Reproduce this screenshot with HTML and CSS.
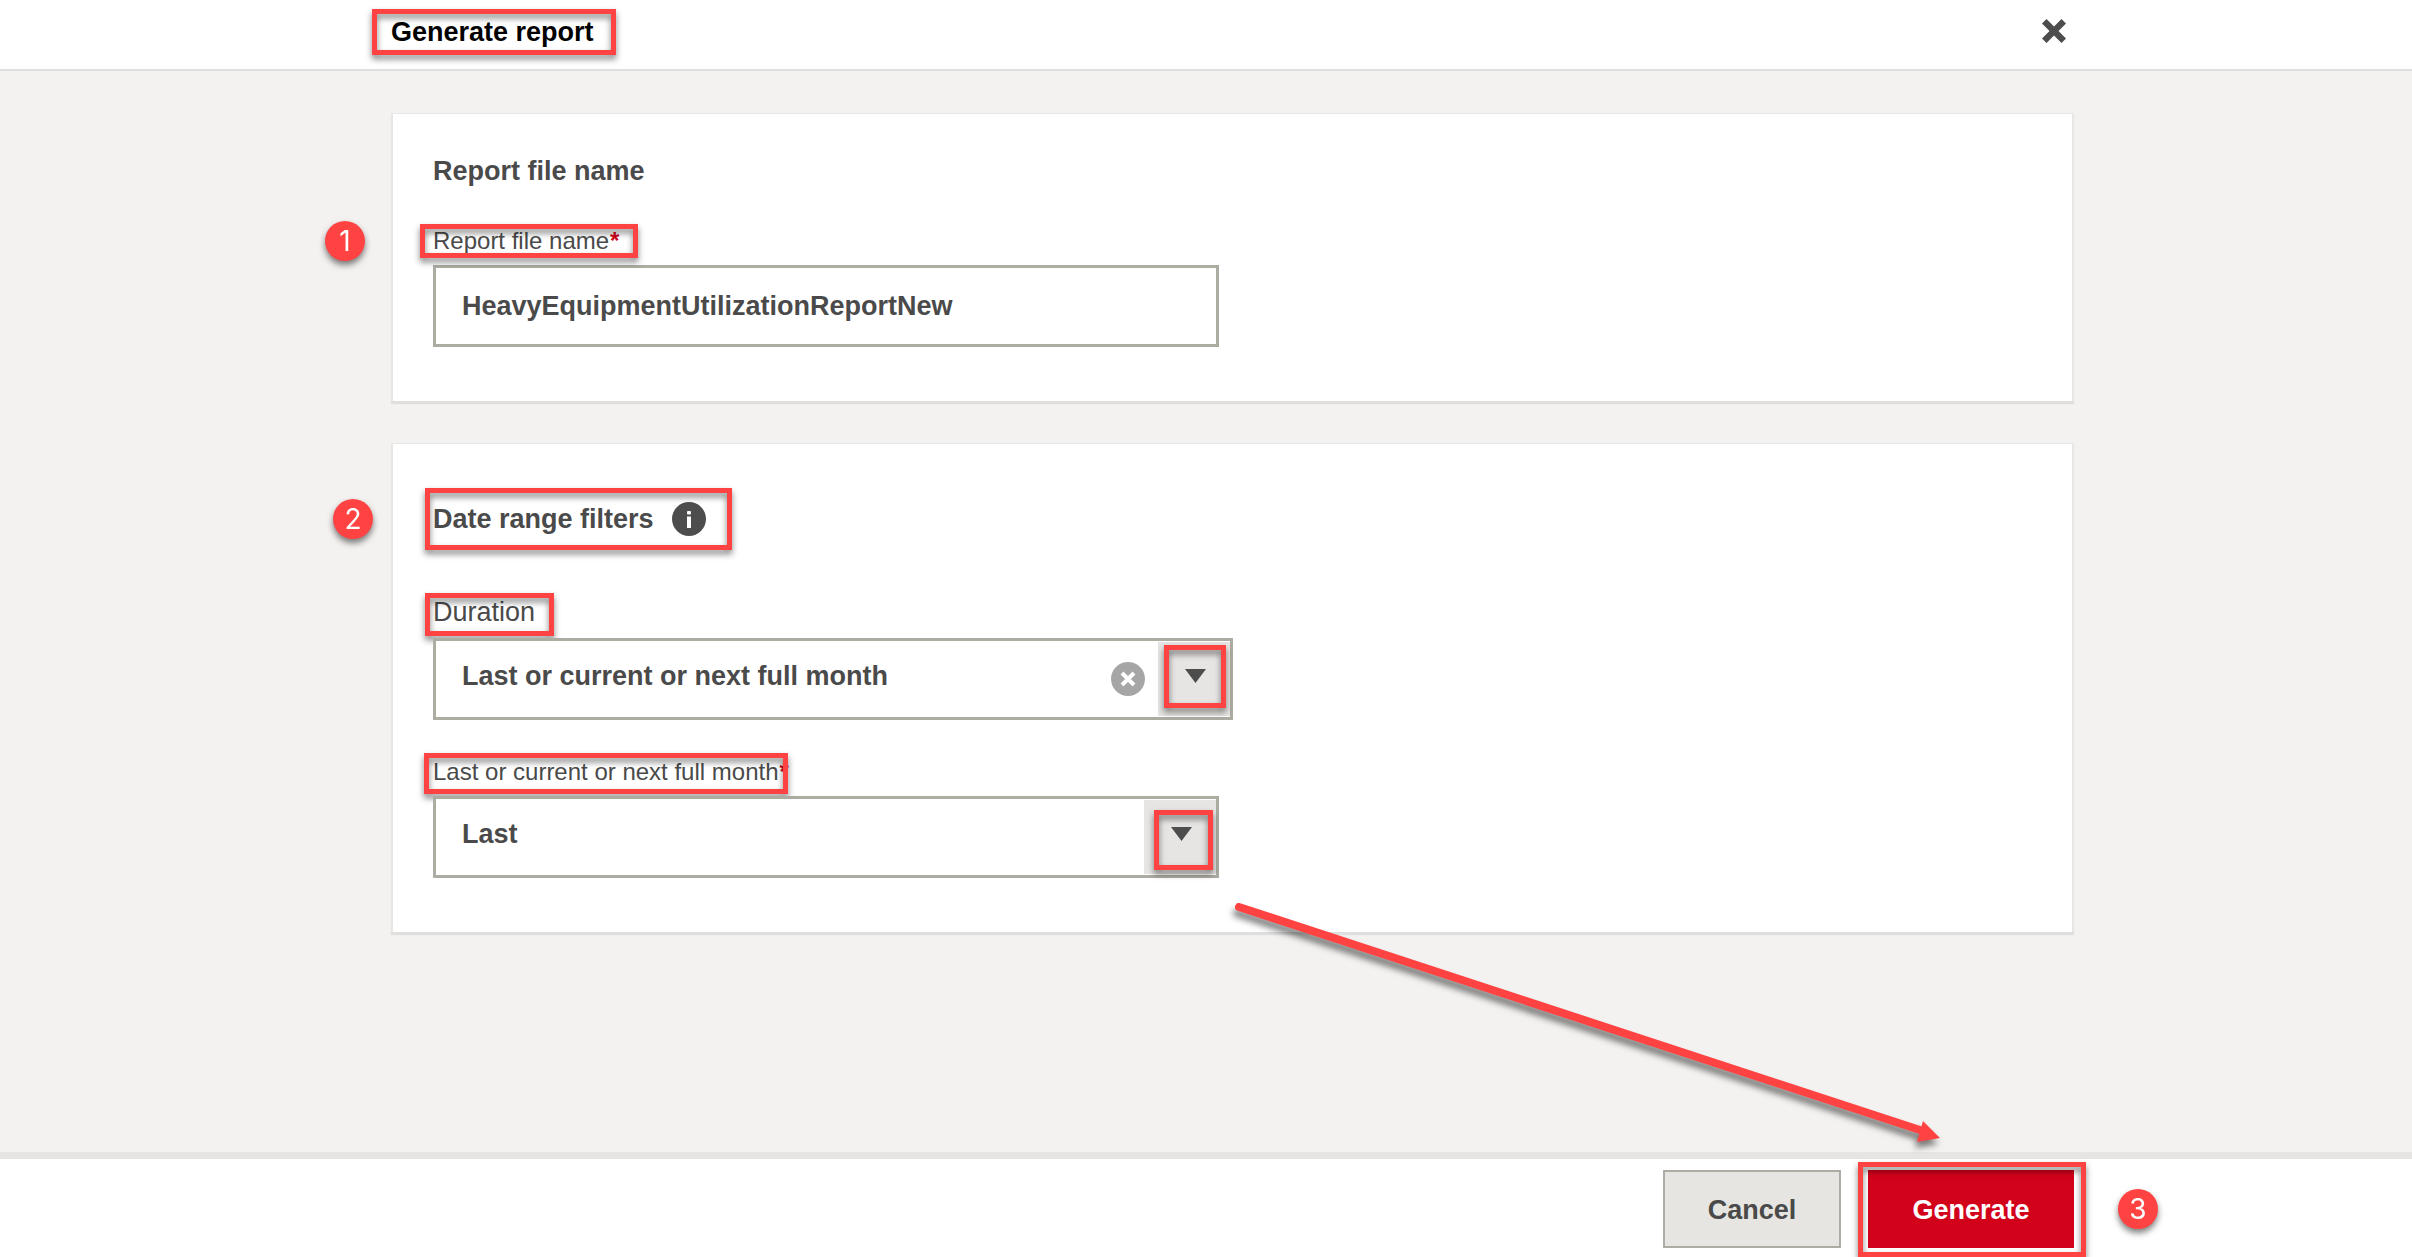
FILE: index.html
```html
<!DOCTYPE html>
<html lang="en">
<head>
<meta charset="utf-8">
<title>Generate report</title>
<link rel="stylesheet" href="styles.css">
</head>
<body>
<header class="topbar">
  <h1 class="topbar-title marked">Generate report<span class="mark mark-title"></span></h1>
  <button class="close" type="button" aria-label="Close">
    <svg width="24" height="24" viewBox="0 0 24 24"><path d="M4.500 0 12 7.500 19.500 0 24 4.500 16.500 12 24 19.500 19.500 24 12 16.500 4.500 24 0 19.500 7.500 12 0 4.500Z" fill="#4d4d4d"/></svg>
  </button>
</header>

<main class="content">
  <section class="card">
    <h2 class="card-title">Report file name</h2>
    <div class="field">
      <label class="label marked" for="file-name">Report file name<span class="required">*</span><span class="mark mark-file"></span><span class="badge badge-one">1</span></label>
      <input class="control" id="file-name" type="text" value="HeavyEquipmentUtilizationReportNew" required>
    </div>
  </section>

  <section class="card card-filters">
    <h2 class="card-title card-title-info marked">Date range filters
      <svg width="34" height="34" viewBox="0 0 34 34"><circle cx="17" cy="17" r="17" fill="#4d4d4d"/><rect x="15" y="9" width="4" height="3.500" rx="1" fill="#fff"/><rect x="15" y="14.500" width="4" height="11.500" fill="#fff"/></svg>
      <span class="mark mark-dates"></span><span class="badge badge-two">2</span>
    </h2>
    <div class="field">
      <label class="label label-large marked" for="duration">Duration<span class="mark mark-duration"></span></label>
      <div class="picker picker-wide">
        <select class="control" id="duration"><option>Last or current or next full month</option></select>
        <button class="clear" type="button" aria-label="Clear duration">
          <svg width="34" height="34" viewBox="0 0 34 34"><circle cx="17" cy="17" r="17" fill="#a6a6a6"/><path d="M11 11l12 12M23 11l-12 12" stroke="#fff" stroke-width="4"/></svg>
        </button>
        <span class="arrow"><svg width="21" height="14" viewBox="0 0 21 14"><path d="M0 0H21L10.500 14Z" fill="#4d4d4d"/></svg></span>
        <span class="mark mark-arrow-one"></span>
      </div>
    </div>
    <div class="field">
      <label class="label marked" for="month">Last or current or next full month<span class="required">*</span><span class="mark mark-month"></span></label>
      <div class="picker">
        <select class="control" id="month" required><option>Last</option></select>
        <span class="arrow"><svg width="21" height="14" viewBox="0 0 21 14"><path d="M0 0H21L10.500 14Z" fill="#4d4d4d"/></svg></span>
        <span class="mark mark-arrow-two"></span>
      </div>
    </div>
  </section>
  <svg class="pointer" width="720" height="260" viewBox="0 0 720 260"><path d="M9 9 690 232" stroke="#ff4343" stroke-width="8" stroke-linecap="round"/><path d="M693 223 710 240 687 244Z" fill="#ff4343"/></svg>
</main>

<footer class="actions">
  <button class="button" type="button">Cancel</button>
  <button class="button button-primary" type="submit">Generate<span class="mark mark-generate"></span><span class="badge badge-three">3</span></button>
</footer>
</body>
</html>
```

FILE: styles.css
```css
* { box-sizing: border-box; }

body {
  margin: 0;
  min-height: 100vh;
  display: flex;
  flex-direction: column;
  background: #f3f2f0;
  color: #4a4a4a;
  font-family: "Liberation Sans", Arial, sans-serif;
  font-size: 27px;
}

h1, h2 { margin: 0; font-size: 27px; line-height: 32px; font-weight: 700; }
svg { display: block; }

.topbar {
  display: flex;
  justify-content: space-between;
  align-items: center;
  height: 71px;
  padding: 0 338px 7px 391px;
  border-bottom: 2px solid #e0dfde;
  background: #fff;
}
.topbar-title { padding-top: 2px; color: #000; }

.close, .clear {
  padding: 0;
  border: 0;
  background: none;
  cursor: pointer;
}
.close { padding: 8px; }

.content {
  position: relative;
  flex: 1;
  display: flex;
  flex-direction: column;
  gap: 42px;
  padding: 42px 338px 42px 391px;
}

.card {
  display: flex;
  flex-direction: column;
  gap: 40px;
  padding: 41px 40px;
  border: 2px solid #e8e7e6;
  border-top-width: 1px;
  border-bottom: 0;
  box-shadow: 0 3px 1px #e0dfde;
  background: #fff;
  min-height: 288px;
}
.card-filters { gap: 38px; min-height: 489px; padding-top: 58px; }
.card-filters .card-title { margin-bottom: 22px; }
.card-title-info { display: flex; align-items: center; gap: 18px; }

.field { display: flex; flex-direction: column; align-items: flex-start; gap: 10px; }

.marked { position: relative; width: fit-content; }

.label { font-size: 24px; line-height: 28px; }
.label-large { font-size: 27px; line-height: 32px; }
.required { margin-left: 1px; color: #d0021b; font-weight: 700; }

.control {
  display: block;
  width: 100%;
  max-width: 786px;
  height: 82px;
  padding: 0 26px;
  border: 3px solid #acaca2;
  border-radius: 0;
  background: #fff;
  color: #4a4a4a;
  font: 700 27px "Liberation Sans", Arial, sans-serif;
}
select.control { max-width: none; padding-bottom: 6px; appearance: none; }

.picker { position: relative; width: 100%; max-width: 786px; }
.picker-wide { max-width: 800px; }
.arrow {
  position: absolute;
  top: 4px;
  right: 3px;
  width: 72px;
  height: 74px;
  padding: 27px 0 0 27px;
  background: #e6e5e3;
  pointer-events: none;
}
.clear { position: absolute; top: 24px; right: 88px; }

.actions {
  display: flex;
  justify-content: flex-end;
  align-items: flex-start;
  gap: 27px;
  height: 105px;
  padding: 11px 338px 0 391px;
  border-top: 7px solid #e6e5e3;
  background: #fff;
}
.button {
  position: relative;
  width: 178px;
  height: 78px;
  padding: 2px 0 0;
  border: 2px solid #acaca4;
  background: #e6e5e2;
  color: #4a4a4a;
  font: 700 27px "Liberation Sans", Arial, sans-serif;
}
.button-primary { width: 206px; border: 0; background: #d3021b; color: #fff; }

/* Callouts laid over the form */
.mark {
  position: absolute;
  border: 5px solid #ff4343;
  filter: drop-shadow(0 4px 3px rgba(0, 0, 0, 0.5));
  pointer-events: none;
}
.mark-title { inset: -5px -22px -7px -19px; }
.mark-file { inset: -3px -19px -3px -13px; }
.mark-dates { inset: -14px -26px -14px -8px; }
.mark-duration { inset: -3px -19px -8px -8px; }
.mark-month { inset: -5px 1px -8px -9px; }
.mark-arrow-one { top: 7px; right: 7px; width: 62px; height: 63px; }
.mark-arrow-two { top: 14px; right: 6px; width: 59px; height: 60px; }
.mark-generate { inset: -8px -12px -9px -10px; }

.badge {
  position: absolute;
  width: 40px;
  height: 40px;
  border-radius: 50%;
  background: #ff4343;
  color: #fff;
  font: 400 28px/40px Inter, "Liberation Sans", sans-serif;
  text-align: center;
  filter: drop-shadow(0 4px 3px rgba(0, 0, 0, 0.5));
}
.badge-one { top: -6px; left: -108px; }
.badge-two { top: -3px; left: -100px; }
.badge-three { top: 19px; right: -84px; }

.pointer {
  position: absolute;
  top: 827px;
  right: 462px;
  filter: drop-shadow(-2px 6px 3px rgba(0, 0, 0, 0.5));
  pointer-events: none;
}
```
